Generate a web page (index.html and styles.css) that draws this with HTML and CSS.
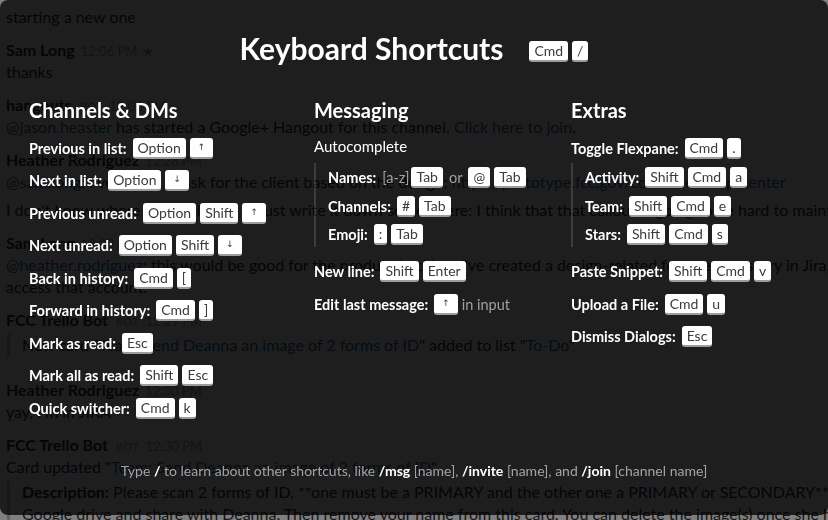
FILE: index.html
```html
<!DOCTYPE html>
<html>
<head>
<meta charset="utf-8">
<title>Keyboard Shortcuts</title>
<link rel="stylesheet" href="styles.css">
</head>
<body>
<div class="chat">
  <div class="msg"><div class="line">starting a new one</div></div>
  <div class="msg">
    <div class="line"><span class="name">Sam Long</span><span class="time">12:06 PM</span><span class="star">★</span></div>
    <div class="line">thanks</div>
  </div>
  <div class="msg">
    <div class="line"><span class="name">hangouts</span><span class="bot">BOT</span><span class="time">12:06 PM</span></div>
    <div class="line"><span class="link">@jason.heaster</span> has started a Google+ Hangout for this channel. <span class="link">Click here to join</span>.</div>
  </div>
  <div class="msg">
    <div class="line"><span class="name">Heather Rodriguez</span><span class="time">12:28 PM</span></div>
    <div class="line"><span class="link">@sam.long</span>: I've added a task for the client based on the design: <span class="link">https://prototype.fcc.gov/consumer-help-center</span></div>
    <div class="line para">I don't know where to put this so I'll just write it down somewhere: I think that that callout is going to be hard to maintain</div>
  </div>
  <div class="msg">
    <div class="line"><span class="name">Sam Long</span><span class="time">12:29 PM</span></div>
    <div class="line"><span class="link">@heather.rodriguez</span>: this would be good for the product backlog. I've created a design-related feature as a story in Jira, perhaps you can</div>
    <div class="line">access that account.</div>
  </div>
  <div class="msg">
    <div class="line"><span class="name">FCC Trello Bot</span><span class="bot">BOT</span><span class="time">12:29 PM</span></div>
    <div class="attach first"><div class="line">New card "<span class="link">Team: Send Deanna an image of 2 forms of ID</span>" added to list "<span class="link">To-Do</span>"</div></div>
  </div>
  <div class="msg">
    <div class="line"><span class="name">Heather Rodriguez</span><span class="time">12:30 PM</span></div>
    <div class="line">yay, I'm in JIRA</div>
  </div>
  <div class="msg">
    <div class="line"><span class="name">FCC Trello Bot</span><span class="bot">BOT</span><span class="time">12:30 PM</span></div>
    <div class="line">Card updated "<span class="link">Team: Send Deanna an image of 2 forms of ID</span>"</div>
    <div class="attach">
      <div class="line"><span class="name">Description:</span> Please scan 2 forms of ID, **one must be a PRIMARY and the other one a PRIMARY or SECONDARY**, as specified in the guide, upload to</div>
      <div class="line">Google drive and share with Deanna. Then remove your name from this card. You can delete the image(s) once she has them</div>
    </div>
  </div>
</div>

<div class="dim"></div>

<div class="modal">
  <header class="title-bar">
    <h1>Keyboard Shortcuts</h1>
    <span class="keys title-keys"><kbd>Cmd</kbd><kbd>/</kbd></span>
  </header>

  <div class="columns">
    <section class="col">
      <h2>Channels &amp; DMs</h2>
      <div class="row"><b>Previous in list:</b><kbd>Option</kbd><kbd class="arrow">↑</kbd></div>
      <div class="row"><b>Next in list:</b><kbd>Option</kbd><kbd class="arrow">↓</kbd></div>
      <div class="row"><b>Previous unread:</b><kbd>Option</kbd><kbd>Shift</kbd><kbd class="arrow">↑</kbd></div>
      <div class="row"><b>Next unread:</b><kbd>Option</kbd><kbd>Shift</kbd><kbd class="arrow">↓</kbd></div>
      <div class="row"><b>Back in history:</b><kbd>Cmd</kbd><kbd>[</kbd></div>
      <div class="row"><b>Forward in history:</b><kbd>Cmd</kbd><kbd>]</kbd></div>
      <div class="row"><b>Mark as read:</b><kbd>Esc</kbd></div>
      <div class="row"><b>Mark all as read:</b><kbd>Shift</kbd><kbd>Esc</kbd></div>
      <div class="row"><b>Quick switcher:</b><kbd>Cmd</kbd><kbd>k</kbd></div>
    </section>

    <section class="col">
      <h2>Messaging</h2>
      <div class="row"><span class="plain">Autocomplete</span></div>
      <div class="sub">
        <div class="row"><b>Names:</b><span class="muted tight">[a-z]</span><kbd>Tab</kbd><span class="muted or">or</span><kbd>@</kbd><kbd>Tab</kbd></div>
        <div class="row"><b>Channels:</b><kbd>#</kbd><kbd>Tab</kbd></div>
        <div class="row"><b>Emoji:</b><kbd>:</kbd><kbd>Tab</kbd></div>
      </div>
      <div class="row"><b>New line:</b><kbd>Shift</kbd><kbd>Enter</kbd></div>
      <div class="row"><b>Edit last message:</b><kbd class="arrow">↑</kbd><span class="muted">in input</span></div>
    </section>

    <section class="col">
      <h2>Extras</h2>
      <div class="row"><b>Toggle Flexpane:</b><kbd>Cmd</kbd><kbd>.</kbd></div>
      <div class="sub">
        <div class="row"><b>Activity:</b><kbd>Shift</kbd><kbd>Cmd</kbd><kbd>a</kbd></div>
        <div class="row"><b>Team:</b><kbd>Shift</kbd><kbd>Cmd</kbd><kbd>e</kbd></div>
        <div class="row"><b>Stars:</b><kbd>Shift</kbd><kbd>Cmd</kbd><kbd>s</kbd></div>
      </div>
      <div class="row"><b>Paste Snippet:</b><kbd>Shift</kbd><kbd>Cmd</kbd><kbd>v</kbd></div>
      <div class="row"><b>Upload a File:</b><kbd>Cmd</kbd><kbd>u</kbd></div>
      <div class="row"><b>Dismiss Dialogs:</b><kbd>Esc</kbd></div>
    </section>
  </div>

  <p class="footer">Type <b>/</b> to learn about other shortcuts, like <b>/msg</b> [name], <b>/invite</b> [name], and <b>/join</b> [channel name]</p>
</div>
</body>
</html>
```

FILE: styles.css
```css
* {
  box-sizing: border-box;
  margin: 0;
  padding: 0;
}

html,
body {
  width: 828px;
  height: 520px;
  overflow: hidden;
}

body {
  background: #ffffff;
  font-family: Lato, "Noto Sans", sans-serif;
  font-size: 16px;
  line-height: 22px;
  color: #2c2d30;
}

/* ---------- background chat ---------- */
.chat {
  padding-left: 6px;
}

.msg {
  padding: 5.5px 0;
}

.line {
  height: 22px;
  white-space: nowrap;
}

.para {
  margin-top: 6px;
}

.name {
  font-weight: 700;
}

.time {
  font-size: 13px;
  color: #9e9ea6;
  margin-left: 6px;
}

.bot {
  font-size: 11px;
  color: #9e9ea6;
  margin-left: 8px;
  letter-spacing: 0.5px;
}

.star {
  font-size: 13px;
  color: #9e9ea6;
  margin-left: 5px;
}

.link {
  color: #1f6fa6;
}

.attach {
  margin: 3px 0 0 1px;
  border-left: 3px solid #c6c6c6;
  padding-left: 12px;
}

.attach.first {
  margin-top: 3px;
  margin-bottom: 12px;
}

/* ---------- overlay + modal ---------- */
.dim {
  position: fixed;
  inset: 0;
  background: rgba(0, 0, 0, 0.5);
}

.modal {
  position: fixed;
  left: 0;
  top: 0;
  width: 828px;
  height: 515px;
  border-radius: 8px;
  background: rgba(0, 0, 0, 0.76);
  color: #ffffff;
  display: flex;
  flex-direction: column;
  padding: 30px 0 34px 0;
}

.title-bar {
  display: flex;
  justify-content: center;
  align-items: center;
  gap: 26px;
}

.title-bar h1 {
  font-size: 30px;
  line-height: 36px;
  font-weight: 700;
}

.keys {
  display: flex;
  gap: 4px;
}

.title-keys {
  margin-top: 6px;
}

kbd {
  display: inline-block;
  font-family: Lato, "Noto Sans", sans-serif;
  font-size: 14px;
  line-height: 19px;
  height: 21px;
  min-width: 13px;
  padding: 0 5px;
  text-align: center;
  color: #3b3b3d;
  background: #ffffff;
  border-radius: 3px;
  border-bottom: 2px solid #9c9c9c;
}

kbd.arrow {
  font-family: "DejaVu Sans", sans-serif;
  font-size: 9px;
  padding: 0 8px;
}

.columns {
  display: grid;
  grid-template-columns: 285px 257px 1fr;
  margin-top: 32px;
  padding-left: 29px;
}

.col {
  display: flex;
  flex-direction: column;
}

.col h2 {
  font-size: 20px;
  line-height: 24px;
  font-weight: 700;
  margin-bottom: 15.5px;
}

.row {
  display: flex;
  align-items: center;
  gap: 4px;
  height: 21px;
  font-size: 14.5px;
  line-height: 21px;
  white-space: nowrap;
}

.row + .row {
  margin-top: 11.5px;
}

.row b {
  font-weight: 700;
  margin-right: 2px;
}

.plain {
  font-size: 15px;
  font-weight: 400;
  margin-top: -3px;
}

.muted {
  color: #a0a0a0;
}

.tight {
  margin-right: -2px;
}

.or {
  margin: 0 2px;
}

.sub {
  margin: 4.7px 0 14px;
  padding: 4px 0 2px 12px;
  border-left: 2px solid rgba(255, 255, 255, 0.13);
}

.sub .row + .row {
  margin-top: 7.5px;
}

.footer {
  margin-top: auto;
  text-align: center;
  font-size: 14px;
  line-height: 21px;
  color: #a3a3a3;
}

.footer b {
  color: #ffffff;
  font-weight: 700;
}
```
